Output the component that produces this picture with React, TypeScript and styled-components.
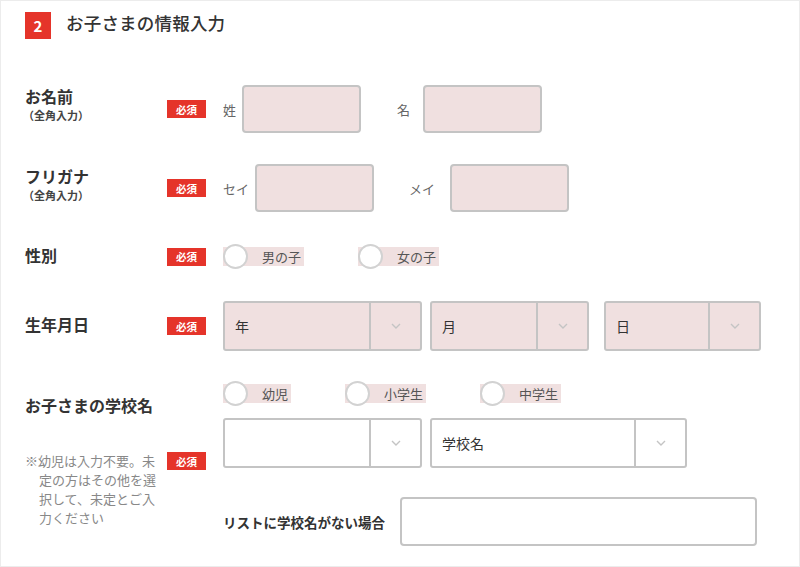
import React from "react";
import styled, { createGlobalStyle } from "styled-components";

const GlobalStyle = createGlobalStyle`
  html, body { margin: 0; padding: 0; background: #fff; }
  body { font-family: "Noto Sans CJK JP", "Noto Sans", sans-serif; color: #333; }
`;

const RED = "#e5342a";
const PINK = "#f0e0e0";
const BORDER = "#c4c4c4";

const Card = styled.div`
  box-sizing: border-box;
  width: 800px;
  height: 567px;
  border: 1px solid #ececec;
  padding: 10px 0 0 24px;
  overflow: hidden;
`;

const Header = styled.div`
  display: flex;
  align-items: center;
  gap: 15px;
  margin-bottom: 46px;
`;

const StepNo = styled.div`
  width: 26px;
  height: 27px;
  background: ${RED};
  color: #fff;
  font-weight: 700;
  font-size: 15px;
  display: flex;
  align-items: center;
  justify-content: center;
`;

const Title = styled.h2`
  margin: 0 0 4px;
  font-size: 17.5px;
  font-weight: 500;
  color: #333;
  letter-spacing: 0.2px;
  line-height: 24px;
`;

const Form = styled.div`
  display: flex;
  flex-direction: column;
  gap: 31px;
`;

const Row = styled.div<{ $h: number }>`
  display: flex;
  align-items: center;
  height: ${(p) => p.$h}px;
`;

const LabelBox = styled.div<{ $pb?: number }>`
  width: 142px;
  display: flex;
  flex-direction: column;
  padding-bottom: ${(p) => p.$pb ?? 4}px;
`;

const LabelMain = styled.div`
  font-size: 16px;
  font-weight: 700;
  line-height: 20px;
  color: #333;
`;

const LabelSub = styled.div`
  font-size: 11px;
  font-weight: 700;
  line-height: 13px;
  color: #444;
  margin-left: -2px;
  margin-top: 3px;
`;

const Badge = styled.span`
  width: 39px;
  height: 18px;
  background: ${RED};
  color: #fff;
  font-size: 10.5px;
  font-weight: 700;
  display: inline-flex;
  align-items: center;
  justify-content: center;
  margin-right: 17px;
  flex-shrink: 0;
`;

const Fields = styled.div`
  display: flex;
  align-items: center;
`;

const FieldLabel = styled.span<{ $gap: number; $ml?: number }>`
  font-size: 13px;
  color: #666;
  margin-right: ${(p) => p.$gap}px;
  margin-left: ${(p) => p.$ml ?? 0}px;
`;

const TextBox = styled.div<{ $w: number; $pink?: boolean; $h?: number }>`
  box-sizing: border-box;
  width: ${(p) => p.$w}px;
  height: ${(p) => p.$h ?? 48}px;
  background: ${(p) => (p.$pink ? PINK : "#fff")};
  border: 2px solid ${BORDER};
  border-radius: 4px;
`;

const RadioGroup = styled.div`
  display: flex;
  align-items: center;
  gap: 54px;
  height: 27px;
`;

const RadioItem = styled.label`
  display: inline-flex;
  align-items: center;
  height: 19px;
  background: ${PINK};
  padding-right: 3px;
  font-size: 13px;
  color: #555;
  gap: 14px;
`;

const RadioCircle = styled.span`
  box-sizing: border-box;
  width: 25px;
  height: 25px;
  border-radius: 50%;
  background: #fff;
  border: 2px solid #d2d2d2;
`;

const SelectBox = styled.div<{ $w: number; $pink?: boolean; $ml?: number }>`
  box-sizing: border-box;
  width: ${(p) => p.$w}px;
  height: 50px;
  margin-left: ${(p) => p.$ml ?? 0}px;
  display: flex;
  background: ${(p) => (p.$pink ? PINK : "#fff")};
  border: 2px solid ${BORDER};
  border-radius: 3px;
`;

const SelectText = styled.div`
  flex: 1;
  display: flex;
  align-items: center;
  padding-left: 10px;
  font-size: 14px;
  color: #333;
`;

const SelectArrow = styled.div`
  width: 49px;
  border-left: 2px solid ${BORDER};
  display: flex;
  align-items: center;
  justify-content: center;
`;

const SelectRow = styled.div`
  display: flex;
  gap: 8px;
`;

const SchoolRow = styled.div`
  display: flex;
  margin-top: -2px;
`;

const SchoolLeft = styled.div`
  width: 198px;
  display: flex;
  flex-direction: column;
`;

const SchoolLabel = styled.div`
  font-size: 16px;
  font-weight: 700;
  line-height: 20px;
  margin-top: 15px;
`;

const NoteRow = styled.div`
  display: flex;
  align-items: flex-start;
  margin-top: 37px;
`;

const Note = styled.p`
  margin: -1px 0 0;
  width: 142px;
  box-sizing: border-box;
  padding-left: 14px;
  padding-right: 4px;
  text-indent: -14px;
  font-size: 13px;
  line-height: 19px;
  color: #888;
`;

const SchoolContent = styled.div`
  display: flex;
  flex-direction: column;
`;

const SchoolSelects = styled.div`
  display: flex;
  gap: 8px;
  margin-top: 11px;
`;

const OtherRow = styled.div`
  display: flex;
  align-items: center;
  margin-top: 29px;
`;

const OtherLabel = styled.span`
  width: 177px;
  font-size: 13.5px;
  font-weight: 700;
  color: #333;
`;

const Chevron = () => (
  <svg width="10" height="6" viewBox="0 0 10 6">
    <path d="M1 1 L5 5 L9 1" fill="none" stroke="#c4c4c4" strokeWidth="1.4" />
  </svg>
);

const Select = ({ w, text, pink, ml }: { w: number; text?: string; pink?: boolean; ml?: number }) => (
  <SelectBox $w={w} $pink={pink} $ml={ml}>
    <SelectText>{text}</SelectText>
    <SelectArrow>
      <Chevron />
    </SelectArrow>
  </SelectBox>
);

const Radio = ({ label }: { label: string }) => (
  <RadioItem>
    <RadioCircle />
    {label}
  </RadioItem>
);

export default function App() {
  return (
    <>
      <GlobalStyle />
      <Card>
        <Header>
          <StepNo>2</StepNo>
          <Title>お子さまの情報入力</Title>
        </Header>
        <Form>
          <Row $h={48}>
            <LabelBox $pb={10}>
              <LabelMain>お名前</LabelMain>
              <LabelSub>（全角入力）</LabelSub>
            </LabelBox>
            <Badge>必須</Badge>
            <Fields>
              <FieldLabel $gap={6}>姓</FieldLabel>
              <TextBox $w={119} $pink />
              <FieldLabel $gap={13} $ml={36}>名</FieldLabel>
              <TextBox $w={119} $pink />
            </Fields>
          </Row>
          <Row $h={48}>
            <LabelBox $pb={8}>
              <LabelMain>フリガナ</LabelMain>
              <LabelSub>（全角入力）</LabelSub>
            </LabelBox>
            <Badge>必須</Badge>
            <Fields>
              <FieldLabel $gap={6}>セイ</FieldLabel>
              <TextBox $w={119} $pink />
              <FieldLabel $gap={15} $ml={35}>メイ</FieldLabel>
              <TextBox $w={119} $pink />
            </Fields>
          </Row>
          <Row $h={27}>
            <LabelBox>
              <LabelMain>性別</LabelMain>
            </LabelBox>
            <Badge>必須</Badge>
            <RadioGroup>
              <Radio label="男の子" />
              <Radio label="女の子" />
            </RadioGroup>
          </Row>
          <Row $h={50}>
            <LabelBox>
              <LabelMain>生年月日</LabelMain>
            </LabelBox>
            <Badge>必須</Badge>
            <SelectRow>
              <Select w={199} text="年" pink />
              <Select w={159} text="月" pink />
              <Select w={157} text="日" pink ml={7} />
            </SelectRow>
          </Row>
          <SchoolRow>
            <SchoolLeft>
              <SchoolLabel>お子さまの学校名</SchoolLabel>
              <NoteRow>
                <Note>※幼児は入力不要。未定の方はその他を選択して、未定とご入力ください</Note>
                <Badge>必須</Badge>
              </NoteRow>
            </SchoolLeft>
            <SchoolContent>
              <RadioGroup>
                <Radio label="幼児" />
                <Radio label="小学生" />
                <Radio label="中学生" />
              </RadioGroup>
              <SchoolSelects>
                <Select w={199} />
                <Select w={257} text="学校名" />
              </SchoolSelects>
              <OtherRow>
                <OtherLabel>リストに学校名がない場合</OtherLabel>
                <TextBox $w={357} $h={49} />
              </OtherRow>
            </SchoolContent>
          </SchoolRow>
        </Form>
      </Card>
    </>
  );
}
